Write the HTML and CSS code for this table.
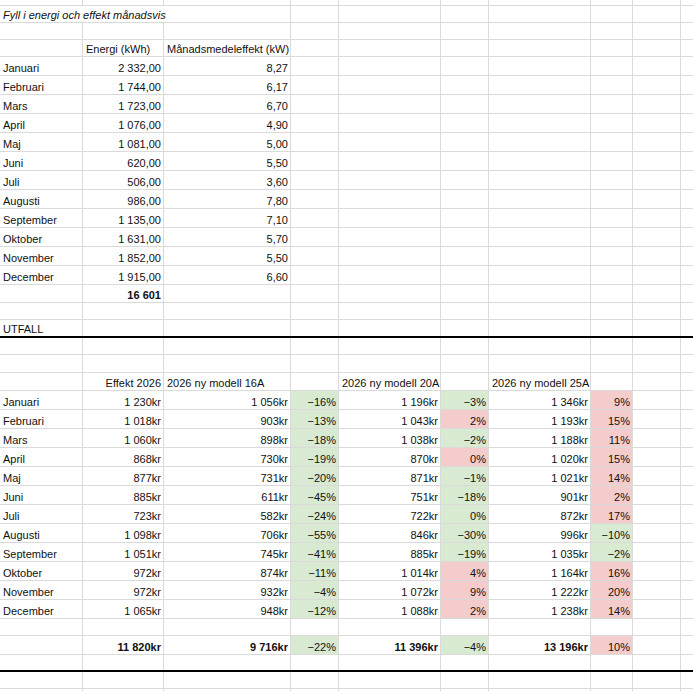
FILE: index.html
```html
<!DOCTYPE html>
<html lang="sv">
<head>
<meta charset="utf-8">
<title>Energi</title>
<link rel="stylesheet" href="styles.css">
</head>
<body>
<div class="sheet">
  <div class="r h6"><div class="c"></div><div class="c"></div><div class="c"></div><div class="c"></div><div class="c"></div><div class="c"></div><div class="c"></div><div class="c"></div><div class="c"></div><div class="c"></div></div>
  <div class="r h17"><div class="c s3 it">Fyll i energi och effekt månadsvis</div><div class="c"></div><div class="c"></div><div class="c"></div><div class="c"></div><div class="c"></div><div class="c"></div><div class="c"></div></div>
  <div class="r h17"><div class="c"></div><div class="c"></div><div class="c"></div><div class="c"></div><div class="c"></div><div class="c"></div><div class="c"></div><div class="c"></div><div class="c"></div><div class="c"></div></div>
  <div class="r h17"><div class="c"></div><div class="c">Energi (kWh)</div><div class="c">Månadsmedeleffekt (kW)</div><div class="c"></div><div class="c"></div><div class="c"></div><div class="c"></div><div class="c"></div><div class="c"></div><div class="c"></div></div>

  <div class="r h19"><div class="c">Januari</div><div class="c n">2 332,00</div><div class="c n">8,27</div><div class="c"></div><div class="c"></div><div class="c"></div><div class="c"></div><div class="c"></div><div class="c"></div><div class="c"></div></div>
  <div class="r h19"><div class="c">Februari</div><div class="c n">1 744,00</div><div class="c n">6,17</div><div class="c"></div><div class="c"></div><div class="c"></div><div class="c"></div><div class="c"></div><div class="c"></div><div class="c"></div></div>
  <div class="r h19"><div class="c">Mars</div><div class="c n">1 723,00</div><div class="c n">6,70</div><div class="c"></div><div class="c"></div><div class="c"></div><div class="c"></div><div class="c"></div><div class="c"></div><div class="c"></div></div>
  <div class="r h19"><div class="c">April</div><div class="c n">1 076,00</div><div class="c n">4,90</div><div class="c"></div><div class="c"></div><div class="c"></div><div class="c"></div><div class="c"></div><div class="c"></div><div class="c"></div></div>
  <div class="r h19"><div class="c">Maj</div><div class="c n">1 081,00</div><div class="c n">5,00</div><div class="c"></div><div class="c"></div><div class="c"></div><div class="c"></div><div class="c"></div><div class="c"></div><div class="c"></div></div>
  <div class="r h19"><div class="c">Juni</div><div class="c n">620,00</div><div class="c n">5,50</div><div class="c"></div><div class="c"></div><div class="c"></div><div class="c"></div><div class="c"></div><div class="c"></div><div class="c"></div></div>
  <div class="r h19"><div class="c">Juli</div><div class="c n">506,00</div><div class="c n">3,60</div><div class="c"></div><div class="c"></div><div class="c"></div><div class="c"></div><div class="c"></div><div class="c"></div><div class="c"></div></div>
  <div class="r h19"><div class="c">Augusti</div><div class="c n">986,00</div><div class="c n">7,80</div><div class="c"></div><div class="c"></div><div class="c"></div><div class="c"></div><div class="c"></div><div class="c"></div><div class="c"></div></div>
  <div class="r h19"><div class="c">September</div><div class="c n">1 135,00</div><div class="c n">7,10</div><div class="c"></div><div class="c"></div><div class="c"></div><div class="c"></div><div class="c"></div><div class="c"></div><div class="c"></div></div>
  <div class="r h19"><div class="c">Oktober</div><div class="c n">1 631,00</div><div class="c n">5,70</div><div class="c"></div><div class="c"></div><div class="c"></div><div class="c"></div><div class="c"></div><div class="c"></div><div class="c"></div></div>
  <div class="r h19"><div class="c">November</div><div class="c n">1 852,00</div><div class="c n">5,50</div><div class="c"></div><div class="c"></div><div class="c"></div><div class="c"></div><div class="c"></div><div class="c"></div><div class="c"></div></div>
  <div class="r h19"><div class="c">December</div><div class="c n">1 915,00</div><div class="c n">6,60</div><div class="c"></div><div class="c"></div><div class="c"></div><div class="c"></div><div class="c"></div><div class="c"></div><div class="c"></div></div>

  <div class="r h18"><div class="c"></div><div class="c n b">16 601</div><div class="c"></div><div class="c"></div><div class="c"></div><div class="c"></div><div class="c"></div><div class="c"></div><div class="c"></div><div class="c"></div></div>
  <div class="r h17"><div class="c"></div><div class="c"></div><div class="c"></div><div class="c"></div><div class="c"></div><div class="c"></div><div class="c"></div><div class="c"></div><div class="c"></div><div class="c"></div></div>
  <div class="r h18 thick"><div class="c">UTFALL</div><div class="c"></div><div class="c"></div><div class="c"></div><div class="c"></div><div class="c"></div><div class="c"></div><div class="c"></div><div class="c"></div><div class="c"></div></div>
  <div class="r h17"><div class="c"></div><div class="c"></div><div class="c"></div><div class="c"></div><div class="c"></div><div class="c"></div><div class="c"></div><div class="c"></div><div class="c"></div><div class="c"></div></div>
  <div class="r h18"><div class="c"></div><div class="c"></div><div class="c"></div><div class="c"></div><div class="c"></div><div class="c"></div><div class="c"></div><div class="c"></div><div class="c"></div><div class="c"></div></div>
  <div class="r h18"><div class="c"></div><div class="c n">Effekt 2026</div><div class="c">2026 ny modell 16A</div><div class="c"></div><div class="c">2026 ny modell 20A</div><div class="c"></div><div class="c">2026 ny modell 25A</div><div class="c"></div><div class="c"></div><div class="c"></div></div>

  <div class="r h19"><div class="c">Januari</div><div class="c n">1 230kr</div><div class="c n">1 056kr</div><div class="c n g">−16%</div><div class="c n">1 196kr</div><div class="c n g">−3%</div><div class="c n">1 346kr</div><div class="c n p">9%</div><div class="c"></div><div class="c"></div></div>
  <div class="r h19"><div class="c">Februari</div><div class="c n">1 018kr</div><div class="c n">903kr</div><div class="c n g">−13%</div><div class="c n">1 043kr</div><div class="c n p">2%</div><div class="c n">1 193kr</div><div class="c n p">15%</div><div class="c"></div><div class="c"></div></div>
  <div class="r h19"><div class="c">Mars</div><div class="c n">1 060kr</div><div class="c n">898kr</div><div class="c n g">−18%</div><div class="c n">1 038kr</div><div class="c n g">−2%</div><div class="c n">1 188kr</div><div class="c n p">11%</div><div class="c"></div><div class="c"></div></div>
  <div class="r h19"><div class="c">April</div><div class="c n">868kr</div><div class="c n">730kr</div><div class="c n g">−19%</div><div class="c n">870kr</div><div class="c n p">0%</div><div class="c n">1 020kr</div><div class="c n p">15%</div><div class="c"></div><div class="c"></div></div>
  <div class="r h19"><div class="c">Maj</div><div class="c n">877kr</div><div class="c n">731kr</div><div class="c n g">−20%</div><div class="c n">871kr</div><div class="c n g">−1%</div><div class="c n">1 021kr</div><div class="c n p">14%</div><div class="c"></div><div class="c"></div></div>
  <div class="r h19"><div class="c">Juni</div><div class="c n">885kr</div><div class="c n">611kr</div><div class="c n g">−45%</div><div class="c n">751kr</div><div class="c n g">−18%</div><div class="c n">901kr</div><div class="c n p">2%</div><div class="c"></div><div class="c"></div></div>
  <div class="r h19"><div class="c">Juli</div><div class="c n">723kr</div><div class="c n">582kr</div><div class="c n g">−24%</div><div class="c n">722kr</div><div class="c n g">0%</div><div class="c n">872kr</div><div class="c n p">17%</div><div class="c"></div><div class="c"></div></div>
  <div class="r h19"><div class="c">Augusti</div><div class="c n">1 098kr</div><div class="c n">706kr</div><div class="c n g">−55%</div><div class="c n">846kr</div><div class="c n g">−30%</div><div class="c n">996kr</div><div class="c n g">−10%</div><div class="c"></div><div class="c"></div></div>
  <div class="r h19"><div class="c">September</div><div class="c n">1 051kr</div><div class="c n">745kr</div><div class="c n g">−41%</div><div class="c n">885kr</div><div class="c n g">−19%</div><div class="c n">1 035kr</div><div class="c n g">−2%</div><div class="c"></div><div class="c"></div></div>
  <div class="r h19"><div class="c">Oktober</div><div class="c n">972kr</div><div class="c n">874kr</div><div class="c n g">−11%</div><div class="c n">1 014kr</div><div class="c n p">4%</div><div class="c n">1 164kr</div><div class="c n p">16%</div><div class="c"></div><div class="c"></div></div>
  <div class="r h19"><div class="c">November</div><div class="c n">972kr</div><div class="c n">932kr</div><div class="c n g">−4%</div><div class="c n">1 072kr</div><div class="c n p">9%</div><div class="c n">1 222kr</div><div class="c n p">20%</div><div class="c"></div><div class="c"></div></div>
  <div class="r h19"><div class="c">December</div><div class="c n">1 065kr</div><div class="c n">948kr</div><div class="c n g">−12%</div><div class="c n">1 088kr</div><div class="c n p">2%</div><div class="c n">1 238kr</div><div class="c n p">14%</div><div class="c"></div><div class="c"></div></div>

  <div class="r h17"><div class="c"></div><div class="c"></div><div class="c"></div><div class="c"></div><div class="c"></div><div class="c"></div><div class="c"></div><div class="c"></div><div class="c"></div><div class="c"></div></div>
  <div class="r h19"><div class="c"></div><div class="c n b">11 820kr</div><div class="c n b">9 716kr</div><div class="c n g">−22%</div><div class="c n b">11 396kr</div><div class="c n g">−4%</div><div class="c n b">13 196kr</div><div class="c n p">10%</div><div class="c"></div><div class="c"></div></div>
  <div class="r h17 thick"><div class="c"></div><div class="c"></div><div class="c"></div><div class="c"></div><div class="c"></div><div class="c"></div><div class="c"></div><div class="c"></div><div class="c"></div><div class="c"></div></div>
  <div class="r h17"><div class="c"></div><div class="c"></div><div class="c"></div><div class="c"></div><div class="c"></div><div class="c"></div><div class="c"></div><div class="c"></div><div class="c"></div><div class="c"></div></div>
  <div class="r h20"><div class="c"></div><div class="c"></div><div class="c"></div><div class="c"></div><div class="c"></div><div class="c"></div><div class="c"></div><div class="c"></div><div class="c"></div><div class="c"></div></div>
</div>
</body>
</html>
```

FILE: styles.css
```css
html, body {
  margin: 0;
  padding: 0;
  background: #ffffff;
  overflow: hidden;
}

.sheet {
  width: 693px;
  overflow: hidden;
  font-family: "Liberation Sans", Arial, sans-serif;
  font-size: 11px;
  color: #111111;
}

.r {
  display: grid;
  grid-template-columns: 83px 81px 127px 48px 102px 48px 102px 42px 48px 60px;
  width: 741px;
  box-sizing: border-box;
  border-bottom: 1px solid #dadada;
}

.h6 { height: 6px; }
.h17 { height: 17px; }
.h18 { height: 18px; }
.h19 { height: 19px; }
.h20 { height: 20px; }

.r.thick {
  border-bottom: 2px solid #000000;
}

.c {
  box-sizing: border-box;
  border-right: 1px solid #dadada;
  display: flex;
  align-items: flex-end;
  padding: 0 2px 0 3px;
  line-height: 13px;
  white-space: nowrap;
  overflow: visible;
  min-width: 0;
}

.c.s3 {
  grid-column: span 3;
}

.it {
  font-style: italic;
}

.n {
  justify-content: flex-end;
}

.b {
  font-weight: bold;
}

.g {
  background: #d9ead3;
}

.p {
  background: #f4cccc;
}
```
